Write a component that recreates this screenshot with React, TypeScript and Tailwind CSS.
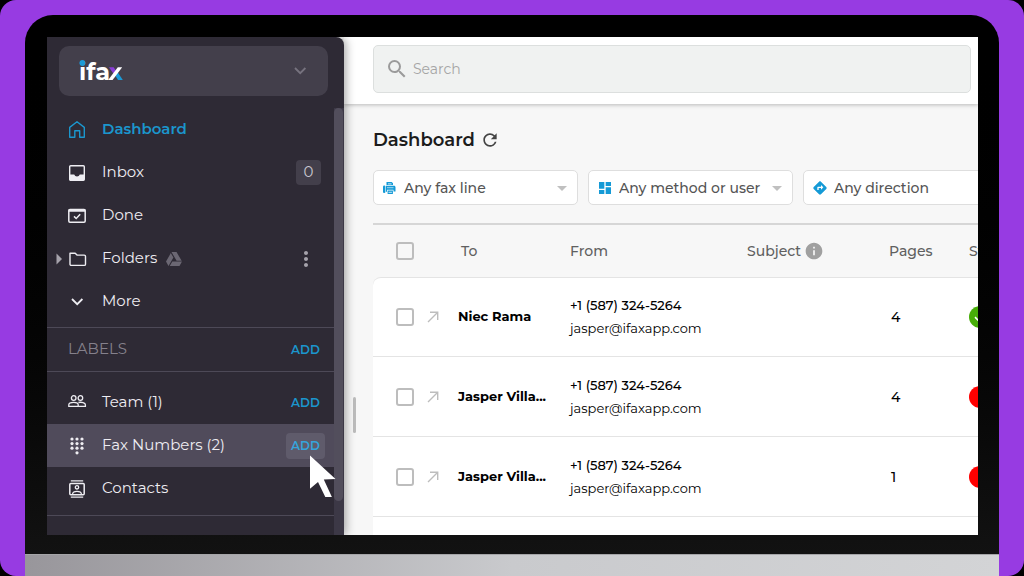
import type { ReactNode } from "react";
import {
  MdArrowDropDown,
  MdDashboard,
  MdDirections,
  MdInfo,
  MdMoreVert,
  MdRefresh,
  MdSearch,
} from "react-icons/md";
import { FaGoogleDrive } from "react-icons/fa";

function LineIcon({ children, width = 1.6 }: { children: ReactNode; width?: number }) {
  return (
    <svg viewBox="0 0 20 20" className="size-5" fill="none" stroke="currentColor" strokeWidth={width} aria-hidden="true">
      {children}
    </svg>
  );
}

const icons = {
  home: (
    <LineIcon width={1.4}>
      <path d="M2.7 17.2V7.4L10 1.8l7.3 5.6v9.8h-4.6v-6.4H7.8v6.4H2.7Z" strokeLinejoin="round" />
    </LineIcon>
  ),
  inbox: (
    <LineIcon width={1.4}>
      <rect x="2.7" y="2.7" width="14.6" height="14.6" rx="1" />
      <path d="M2.7 11.6h4.5a3 3 0 0 0 5.6 0h4.5v5.7H2.7Z" fill="currentColor" stroke="none" />
    </LineIcon>
  ),
  done: (
    <LineIcon width={1.5}>
      <rect x="1.8" y="3.4" width="16.4" height="12.8" rx="1.2" />
      <path d="M1.8 4.4h16.4" strokeWidth="2.6" />
      <path d="m7 10.4 2.2 2.1 4-4.2" />
    </LineIcon>
  ),
  folder: (
    <LineIcon width={1.4}>
      <path d="M3.2 4.2h5l1.8 1.9h7.3c.7 0 1.2.4 1.2 1.1v8c0 .7-.5 1.2-1.2 1.2H4.2c-.7 0-1.2-.5-1.2-1.2V4.2Z" strokeLinejoin="round" />
    </LineIcon>
  ),
  more: (
    <LineIcon width={1.8}>
      <path d="m5 7 5.2 5.2L15.400 7" />
    </LineIcon>
  ),
  team: (
    <LineIcon width={1.3}>
      <circle cx="6.7" cy="5" r="2.3" />
      <circle cx="13.4" cy="5" r="2.3" />
      <path d="M1.8 13.4v-1.6c0-1.6 2.4-2.5 4.9-2.5s4.5.9 4.5 2.5v1.6Z" />
      <path d="M11.4 9.5c3-.7 7 .3 7 2.3v1.6h-7.2" />
    </LineIcon>
  ),
  contacts: (
    <LineIcon width={1.5}>
      <rect x="2.8" y="4.4" width="14.4" height="11.4" rx="1" />
      <path d="M3.8 1.8h12.4M3.8 18.2h12.4" strokeWidth="1.3" />
      <circle cx="10" cy="8.3" r="1.7" strokeWidth="1.3" />
      <path d="M5.6 15c.5-3.4 8.3-3.4 8.8 0" strokeWidth="1.3" />
    </LineIcon>
  ),
};

function DialpadIcon() {
  const dots = [5, 10, 15].flatMap((x) => [3, 7.6, 12.2].map((y) => ({ x, y })));
  return (
    <svg viewBox="0 0 20 20" className="size-5" fill="currentColor" aria-hidden="true">
      {dots.map((dot) => (
        <circle key={`${dot.x}-${dot.y}`} cx={dot.x} cy={dot.y} r="1.6" />
      ))}
      <circle cx="10" cy="16.8" r="1.6" />
    </svg>
  );
}

function FaxIcon() {
  return (
    <svg viewBox="0 0 14 14" className="size-3.5" fill="currentColor" aria-hidden="true">
      <path d="M4.5 1h5.2L11 2.300V4H4.5Z" />
      <rect x="1" y="4.5" width="2.4" height="7.5" rx="1.1" />
      <path d="M4 4.8h8c.9 0 1.5.6 1.5 1.5v4.3h-2V8.8H5v2H4Z" />
      <path d="M5.6 9.5h5.3V13H5.6Z" />
      <path d="M6 2.9h3.5M6.5 11.3h3.4" stroke="#fff" strokeWidth=".8" />
      <path d="M5 6.7h6.5" stroke="#fff" strokeWidth=".6" />
    </svg>
  );
}

function SentIcon() {
  return (
    <svg viewBox="0 0 22 22" className="size-[22px]" role="img" aria-label="Sent">
      <circle cx="11" cy="11" r="11" fill="#47ad08" />
      <path d="m6 11.2 3.5 3.3 6.5-7" fill="none" stroke="#fff" strokeWidth="1.6" />
    </svg>
  );
}

function FailedIcon() {
  return (
    <svg viewBox="0 0 22 22" className="size-[22px]" role="img" aria-label="Failed">
      <circle cx="11" cy="11" r="11" fill="#fe0000" />
    </svg>
  );
}

function Logo() {
  return (
    <svg viewBox="0 0 44 22" className="h-[22px] w-11" role="img" aria-label="ifax">
      <text x="0" y="20" fill="#fff" className="text-2xl font-bold">
        ifa
      </text>
      <circle cx="3.4" cy="3" r="2.9" fill="#1b9bd7" />
      <path d="M30 7.200h4.600l3 4.200-2.400 3.300Z" fill="#8a3fd6" />
      <path d="m35.600 14.400 2.400-3.200L43.800 20h-4.800Z" fill="#1b9bd7" />
      <path d="M29.200 20 38.800 7.200h4.400L33.600 20Z" fill="#fff" />
    </svg>
  );
}

interface NavItemProps {
  icon: ReactNode;
  label: string;
  current?: boolean;
  highlighted?: boolean;
  lead?: ReactNode;
  mark?: ReactNode;
  children?: ReactNode;
}

function NavItem({ icon, label, current, highlighted, lead, mark, children }: NavItemProps) {
  return (
    <li className={`flex h-[43px] items-center pr-[9px] ${highlighted ? "bg-[#504b5b]" : ""}`}>
      <span className="flex w-5 shrink-0 items-center pl-2 text-[#a5a2ab]">{lead}</span>
      <a
        href="#"
        aria-current={current ? "page" : undefined}
        className={`flex flex-1 items-center gap-[15px] ${current ? "font-semibold text-[#1b96cd]" : "text-[#eeedf2]"}`}
      >
        {icon}
        <span>{label}</span>
        {mark}
      </a>
      {children}
    </li>
  );
}

function AddButton({ label, active }: { label: string; active?: boolean }) {
  return (
    <button
      type="button"
      aria-label={label}
      className={`h-[26px] w-[39px] rounded text-xs font-semibold ${active ? "bg-[#5f5b6b] text-[#35a5dc]" : "text-[#1b96cd]"}`}
    >
      ADD
    </button>
  );
}

function Sidebar() {
  return (
    <aside className="relative z-20 flex w-[297px] shrink-0 flex-col rounded-tr-lg bg-[#2e2a35] pt-[9px] text-[15px] shadow-[2px_0_10px_rgba(0,0,0,0.35)]">
      <button
        type="button"
        aria-label="Switch workspace"
        className="mr-4 ml-3 flex h-[50px] shrink-0 items-center justify-between rounded-[10px] bg-[#433f4b] pr-[18px] pl-5"
      >
        <Logo />
        <span className="text-[#77737f]">{icons.more}</span>
      </button>
      <div className="mt-3 flex min-h-0 flex-1">
        <nav aria-label="Main" className="min-w-0 flex-1">
          <ul>
            <NavItem icon={icons.home} label="Dashboard" current />
            <NavItem icon={icons.inbox} label="Inbox">
              <span className="mr-1 flex size-[25px] items-center justify-center rounded bg-[#433f4b] text-[#c9c7ce]">0</span>
            </NavItem>
            <NavItem icon={icons.done} label="Done" />
            <NavItem
              icon={icons.folder}
              label="Folders"
              lead={
                <svg viewBox="0 0 8 12" className="h-3 w-2" aria-hidden="true">
                  <path d="M1.5.5 7 6l-5.5 5.5Z" fill="currentColor" />
                </svg>
              }
              mark={<FaGoogleDrive className="-ml-1.5 size-4 text-[#6b6773]" />}
            >
              <button type="button" aria-label="Folder options" className="mr-[7px] text-[#a5a2ab]">
                <MdMoreVert className="size-6" />
              </button>
            </NavItem>
            <NavItem icon={icons.more} label="More" />
          </ul>
          <div className="mt-1 flex h-[45px] items-center justify-between border-y border-[#4d4957] pr-[9px] pl-[21px]">
            <h2 className="text-[#85818c]">LABELS</h2>
            <AddButton label="Add label" />
          </div>
          <ul className="mt-[9px] border-b border-[#4d4957] pb-[5px]">
            <NavItem icon={icons.team} label="Team (1)">
              <AddButton label="Add team member" />
            </NavItem>
            <NavItem icon={<DialpadIcon />} label="Fax Numbers (2)" highlighted>
              <AddButton label="Add fax number" active />
            </NavItem>
            <NavItem icon={icons.contacts} label="Contacts" />
          </ul>
        </nav>
        <div className="w-[10px] bg-[#3c3846] pr-px">
          <div className="h-[92%] rounded-full bg-[#524e5c]" />
        </div>
      </div>
      <svg viewBox="0 0 28 44" className="absolute top-[418px] left-[262px] h-11 w-7" aria-hidden="true">
        <path d="M1 .5v33.2l8-6.7 7.3 15h6.6l-8.1-17.4 11.7-.5Z" fill="#fff" />
      </svg>
    </aside>
  );
}

function Filter({ icon, label }: { icon: ReactNode; label: string }) {
  return (
    <div className="relative flex w-[205px] shrink-0 items-center">
      <span className="pointer-events-none absolute left-[9px] text-[#159ad6]">{icon}</span>
      <select
        aria-label={label}
        className="h-[35px] w-full appearance-none rounded-[5px] border border-[#dedede] bg-white pr-7 pl-[30px] text-sm font-medium text-[#555]"
      >
        <option>{label}</option>
      </select>
      <MdArrowDropDown className="pointer-events-none absolute right-1 size-6 text-[#c0c0c0]" />
    </div>
  );
}

const faxes = [
  { name: "Niec Rama", pages: 4, sent: true },
  { name: "Jasper Villa...", pages: 4, sent: false },
  { name: "Jasper Villa...", pages: 1, sent: false },
];

function Tick({ label }: { label: string }) {
  return (
    <input
      type="checkbox"
      aria-label={label}
      className="ml-[23px] block size-[18px] appearance-none rounded-[3px] border-2 border-[#bdbdbd] bg-transparent"
    />
  );
}

function FaxTable() {
  return (
    <table className="w-full min-w-[680px] table-fixed border-separate border-spacing-0 text-left">
      <colgroup>
        <col className="w-[53px]" />
        <col className="w-8" />
        <col className="w-28" />
        <col className="w-[177px]" />
        <col className="w-[142px]" />
        <col className="w-20" />
        <col />
      </colgroup>
      <thead>
        <tr className="h-[52px] text-sm text-[#606060] [&>th]:font-medium">
          <th><Tick label="Select all faxes" /></th>
          <th aria-label="Direction" />
          <th className="pl-[3px]">To</th>
          <th>From</th>
          <th>
            <span className="flex items-center gap-[3px]">Subject <MdInfo className="size-5 text-[#a0a0a0]" /></span>
          </th>
          <th>Pages</th>
          <th>Status</th>
        </tr>
      </thead>
      <tbody className="text-[13px] text-black [&>tr:first-child>td]:border-t [&>tr:first-child>td:first-child]:rounded-tl-lg">
        {faxes.map((fax, i) => (
          <tr key={i} className="h-20 [&>td]:border-b [&>td]:border-[#e4e4e4] [&>td]:bg-white">
            <td><Tick label={`Select fax ${i + 1}`} /></td>
            <td>
              <svg viewBox="0 0 14 14" className="size-3.5" fill="none" stroke="#bdbdbd" strokeWidth="1.4" aria-hidden="true">
                <path d="M2 12 11.500 2.500M4 2.300h7.700V10" />
              </svg>
            </td>
            <td className="font-bold whitespace-nowrap">{fax.name}</td>
            <td className="leading-[23px]">
              <div className="font-medium">+1 (587) 324-5264</div>
              <div>jasper@ifaxapp.com</div>
            </td>
            <td />
            <td className="pl-0.5 text-sm font-medium">{fax.pages}</td>
            <td>{fax.sent ? <SentIcon /> : <FailedIcon />}</td>
          </tr>
        ))}
        <tr className="h-20 [&>td]:bg-white">
          <td colSpan={7} />
        </tr>
      </tbody>
    </table>
  );
}

export default function App() {
  return (
    <div className="h-screen bg-black font-['Montserrat','Inter',sans-serif]">
      <div className="flex h-full flex-col overflow-hidden rounded-2xl bg-[#973be2] px-[25px] pt-[15px]">
        <div className="flex min-h-0 flex-1 flex-col rounded-t-[28px] bg-linear-to-b from-black to-[#121212] pt-[22px] pr-[21px] pb-[19px] pl-[22px]">
          <div className="flex min-h-0 flex-1 overflow-hidden bg-[#f7f7f7]">
            <Sidebar />
            <main className="relative flex min-w-0 flex-1 flex-col overflow-hidden">
              <header className="z-10 shrink-0 bg-white pt-2 pr-[7px] pb-[11px] pl-[29px] shadow-[0_1px_4px_rgba(0,0,0,0.25)]">
                <label className="flex h-12 items-center gap-1 rounded-[5px] border border-[#dcdfde] bg-[#f0f2f1] pl-[11px]">
                  <MdSearch className="size-6 text-[#9b9b9b]" />
                  <input
                    type="search"
                    aria-label="Search"
                    placeholder="Search"
                    className="flex-1 bg-transparent text-sm outline-none placeholder:text-[#a5a5a5]"
                  />
                </label>
              </header>
              <section className="shrink-0 pl-[29px]">
                <div className="mt-[22px] flex h-7 items-center gap-[5px]">
                  <h1 className="text-lg font-semibold text-[#1c1c1c]">Dashboard</h1>
                  <button type="button" aria-label="Refresh" className="text-[#444]">
                    <MdRefresh className="size-5" />
                  </button>
                </div>
                <div className="mt-4 mb-[18px] flex gap-2.5">
                  <Filter icon={<FaxIcon />} label="Any fax line" />
                  <Filter icon={<MdDashboard className="size-4" />} label="Any method or user" />
                  <Filter icon={<MdDirections className="size-4" />} label="Any direction" />
                </div>
                <div className="border-t-2 border-[#d6d6d6]">
                  <FaxTable />
                </div>
              </section>
              <div className="absolute top-[360px] left-[9px] h-9 w-[3px] rounded-full bg-[#bcbcbc]" />
            </main>
          </div>
        </div>
        <div className="h-[22px] shrink-0 border-t border-[#a5a5a8] bg-linear-to-r from-[#98969b] via-[#c9cacd] to-[#d3d4d6]" />
      </div>
    </div>
  );
}
